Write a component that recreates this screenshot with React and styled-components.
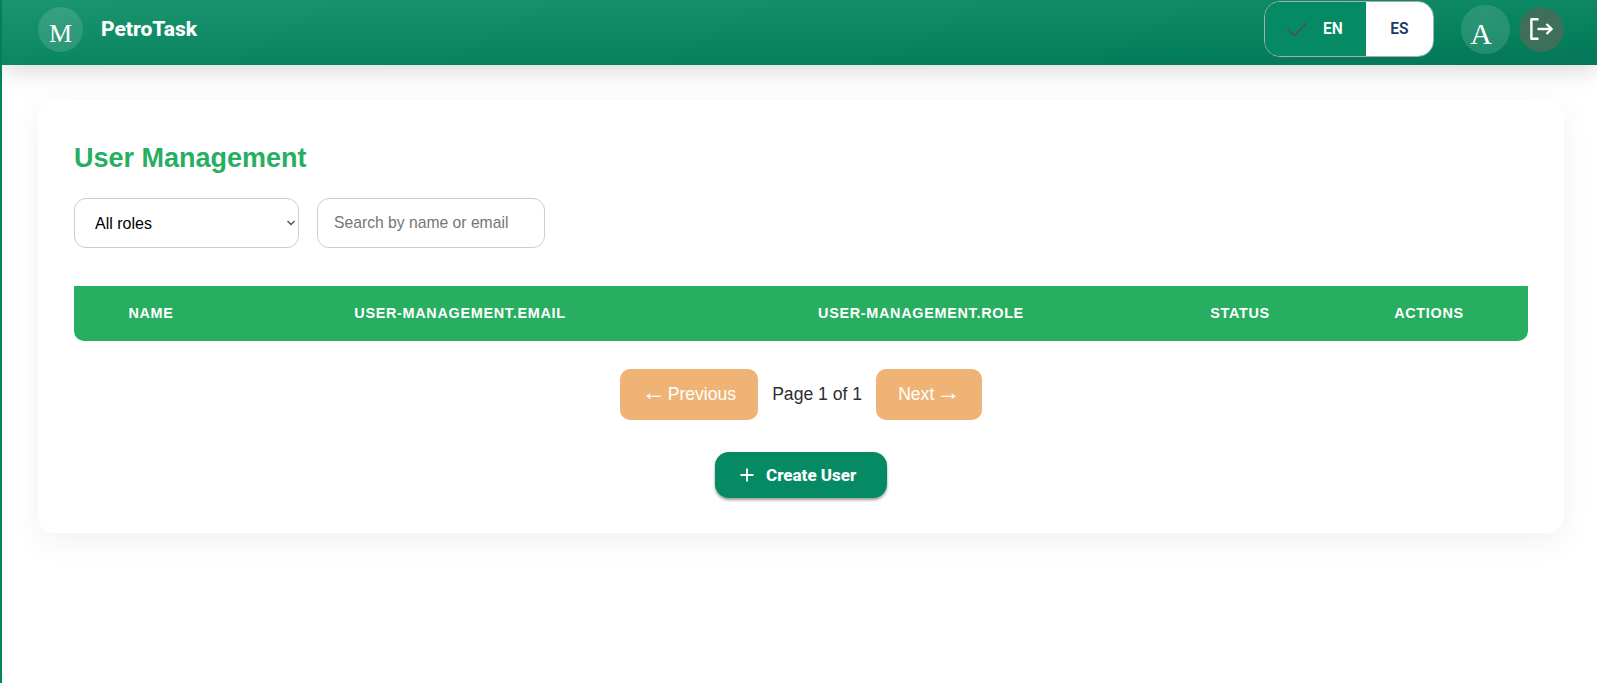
import React from 'react';
import styled, { createGlobalStyle } from 'styled-components';

const GlobalStyle = createGlobalStyle`
  html, body {
    margin: 0;
    padding: 0;
    background: #fff;
  }
  body {
    font-family: "Liberation Sans", Arial, sans-serif;
  }
`;

const Page = styled.div`
  min-height: 683px;
  border-left: 2px solid #068562;
  box-sizing: border-box;
  background: #fff;
`;

const Header = styled.header`
  height: 65px;
  box-sizing: border-box;
  display: flex;
  align-items: center;
  justify-content: space-between;
  padding: 0 33px 7px 36px;
  background: linear-gradient(178deg, #1a9570 0%, #04805b 75%, #06755a 100%);
  box-shadow: 0 6px 24px rgba(0, 0, 0, 0.15);
  position: relative;
`;

const Brand = styled.div`
  display: flex;
  align-items: center;
  gap: 18px;
`;

const Avatar = styled.div`
  width: ${p => p.$size}px;
  height: ${p => p.$size}px;
  border-radius: 50%;
  background: rgba(255, 255, 255, 0.13);
  color: #fff;
  display: flex;
  align-items: center;
  justify-content: center;
  font-family: "Liberation Serif", serif;
  font-size: ${p => p.$font}px;
  padding-top: ${p => p.$drop}px;
  padding-right: ${p => p.$shift || 0}px;
  box-sizing: border-box;
`;

const BrandName = styled.span`
  font-family: Roboto, sans-serif;
  font-weight: 800;
  font-size: 21px;
  color: #fff;
`;

const HeaderRight = styled.div`
  display: flex;
  align-items: center;
`;

const LangSwitch = styled.div`
  display: flex;
  width: 170px;
  height: 56px;
  box-sizing: border-box;
  border: 1px solid #a5aeb2;
  border-radius: 16px;
  overflow: hidden;
  margin-right: 27px;
`;

const LangOption = styled.div`
  display: flex;
  align-items: center;
  justify-content: center;
  gap: 17px;
  width: ${p => (p.$active ? 102 : 68)}px;
  background: ${p => (p.$active ? '#058a64' : '#fff')};
  color: ${p => (p.$active ? '#fff' : '#1f3864')};
  font-family: Roboto, sans-serif;
  font-weight: 600;
  font-size: 15.6px;
`;

const LogoutButton = styled.button`
  width: 45px;
  height: 45px;
  margin-left: 9px;
  border: none;
  padding: 0 2px 0 0;
  border-radius: 50%;
  background: #3e6f5a;
  display: flex;
  align-items: center;
  justify-content: center;
`;

const Card = styled.main`
  margin: 35px 33px 0 36px;
  height: 433px;
  box-sizing: border-box;
  padding: 36px;
  background: #fff;
  border-radius: 16px;
  box-shadow: 0 8px 32px rgba(0, 0, 0, 0.06);
`;

const Title = styled.h2`
  margin: 7px 0 24px;
  color: #27ae60;
  font-size: 27px;
  line-height: 31px;
  font-weight: 700;
`;

const Filters = styled.div`
  display: flex;
  gap: 18px;
  margin-bottom: 38px;
`;

const SelectWrap = styled.div`
  position: relative;
  width: 225px;
  height: 50px;
`;

const RoleSelect = styled.select`
  width: 100%;
  height: 100%;
  box-sizing: border-box;
  padding: 0 20px;
  border: 1px solid #ccc;
  border-radius: 12px;
  background: #fff;
  color: #000;
  font-family: "Liberation Sans", sans-serif;
  font-size: 16px;
  appearance: none;
`;

const Chevron = styled.svg`
  position: absolute;
  right: 4px;
  top: 22px;
  pointer-events: none;
`;

const SearchInput = styled.input`
  width: 228px;
  height: 50px;
  box-sizing: border-box;
  padding: 0 16px;
  border: 1px solid #ccc;
  border-radius: 12px;
  font-family: "Liberation Sans", sans-serif;
  font-size: 15.7px;
  &::placeholder {
    color: #757575;
  }
`;

const UserTable = styled.table`
  width: 100%;
  table-layout: fixed;
  border-collapse: separate;
  border-spacing: 0;
`;

const HeadCell = styled.th`
  height: 55px;
  padding: 0 0 2px;
  box-sizing: border-box;
  width: ${p => p.$width};
  background: #27ae60;
  color: #fff;
  font-size: 14.4px;
  font-weight: 700;
  text-align: center;
  text-transform: uppercase;
  letter-spacing: 0.7px;
  &:first-child {
    border-bottom-left-radius: 10px;
  }
  &:last-child {
    border-bottom-right-radius: 10px;
  }
`;

const Pagination = styled.div`
  display: flex;
  justify-content: center;
  align-items: center;
  gap: 14px;
  margin-top: 28px;
`;

const PageButton = styled.button`
  height: 51px;
  padding: 0 22px;
  border: none;
  border-radius: 10px;
  background: #f0b376;
  color: #fff;
  font-family: "Liberation Sans", sans-serif;
  font-size: 17.6px;
  word-spacing: -3px;
`;

const Arrow = styled.span`
  font-size: 24px;
  line-height: 0;
`;

const PageLabel = styled.span`
  font-size: 17.6px;
  color: #2c2f33;
`;

const CreateRow = styled.div`
  display: flex;
  justify-content: center;
  margin-top: 32px;
`;

const CreateButton = styled.button`
  display: flex;
  align-items: center;
  gap: 12px;
  width: 172px;
  height: 46px;
  box-sizing: border-box;
  padding: 0 0 0 25px;
  border: none;
  border-radius: 14px;
  background: #058a64;
  color: #fff;
  font-family: Roboto, sans-serif;
  font-weight: 800;
  font-size: 17px;
  box-shadow: 0 2px 3px rgba(0, 0, 0, 0.4);
`;

const columns = [
  { label: 'Name', width: '154px' },
  { label: 'user-management.email', width: '464px' },
  { label: 'user-management.role', width: '458px' },
  { label: 'Status', width: '180px' },
  { label: 'Actions', width: 'auto' },
];

const App = () => {
  return (
    <Page>
      <GlobalStyle />
      <Header>
        <Brand>
          <Avatar $size={45} $font={26} $drop={10}>M</Avatar>
          <BrandName>PetroTask</BrandName>
        </Brand>
        <HeaderRight>
          <LangSwitch>
            <LangOption $active>
              <svg width="18" height="13" viewBox="0 0 18 13" fill="none" stroke="#4a4f63" strokeWidth="1.5" overflow="visible">
                <path d="M0 6 L6.3 13 L18 0" />
              </svg>
              EN
            </LangOption>
            <LangOption>ES</LangOption>
          </LangSwitch>
          <Avatar $size={49} $font={30} $drop={9} $shift={9}>A</Avatar>
          <LogoutButton aria-label="Logout">
            <svg width="24" height="24" viewBox="0 0 24 24" fill="none" stroke="#fff" strokeWidth="2.4">
              <path d="M9.5 2.2 H2.4 V21.8 H9.5" strokeLinejoin="round" />
              <path d="M8.5 12 H22.5" />
              <path d="M17.5 7 L22.5 12 L17.5 17" />
            </svg>
          </LogoutButton>
        </HeaderRight>
      </Header>
      <Card>
        <Title>User Management</Title>
        <Filters>
          <SelectWrap>
            <RoleSelect defaultValue="all">
              <option value="all">All roles</option>
            </RoleSelect>
            <Chevron width="8" height="6" viewBox="0 0 8 6" fill="none" stroke="#555" strokeWidth="1.4">
              <path d="M0.5 1 L4 4.5 L7.5 1" />
            </Chevron>
          </SelectWrap>
          <SearchInput placeholder="Search by name or email" />
        </Filters>
        <UserTable>
          <thead>
            <tr>
              {columns.map(col => (
                <HeadCell key={col.label} $width={col.width}>{col.label}</HeadCell>
              ))}
            </tr>
          </thead>
        </UserTable>
        <Pagination>
          <PageButton><Arrow>←</Arrow> Previous</PageButton>
          <PageLabel>Page 1 of 1</PageLabel>
          <PageButton>Next <Arrow>→</Arrow></PageButton>
        </Pagination>
        <CreateRow>
          <CreateButton>
            <svg width="14" height="14" viewBox="0 0 14 14" stroke="#fff" strokeWidth="1.8">
              <path d="M7 0.5 V13.5 M0.5 7 H13.5" />
            </svg>
            Create User
          </CreateButton>
        </CreateRow>
      </Card>
    </Page>
  );
};

export default App;
